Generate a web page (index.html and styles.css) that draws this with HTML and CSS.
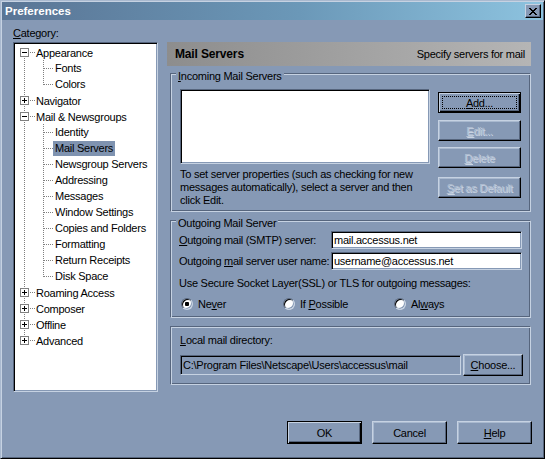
FILE: index.html
```html
<!DOCTYPE html>
<html lang="en">
<head>
<meta charset="utf-8">
<title>Preferences</title>
<link rel="stylesheet" href="styles.css">
</head>
<body>
<div class="window">
  <div class="titlebar">
    <span class="title">Preferences</span>
    <span class="close" aria-label="Close">
      <svg width="8" height="7" viewBox="0 0 8 7" shape-rendering="crispEdges"><path fill="#000" d="M0 0h2v1H0zM6 0h2v1H6zM1 1h2v1H1zM5 1h2v1H5zM2 2h4v1H2zM3 3h2v1H3zM2 4h4v1H2zM1 5h2v1H1zM5 5h2v1H5zM0 6h2v1H0zM6 6h2v1H6z"/></svg>
    </span>
  </div>

  <div class="main">
    <div class="leftcol">
      <div class="cat-label"><u>C</u>ategory:</div>
      <div class="tree">
        <div class="row"><span class="l1 first"><span class="exp minus"></span></span><span class="txt">Appearance</span></div>
        <div class="row"><span class="l1 full"></span><span class="l2 mid"></span><span class="txt">Fonts</span></div>
        <div class="row"><span class="l1 full"></span><span class="l2 last"></span><span class="txt">Colors</span></div>
        <div class="row"><span class="l1 full"><span class="exp plus"></span></span><span class="txt">Navigator</span></div>
        <div class="row"><span class="l1 full"><span class="exp minus"></span></span><span class="txt">Mail &amp; Newsgroups</span></div>
        <div class="row"><span class="l1 full"></span><span class="l2 mid"></span><span class="txt">Identity</span></div>
        <div class="row"><span class="l1 full"></span><span class="l2 mid"></span><span class="txt sel">Mail Servers</span></div>
        <div class="row"><span class="l1 full"></span><span class="l2 mid"></span><span class="txt">Newsgroup Servers</span></div>
        <div class="row"><span class="l1 full"></span><span class="l2 mid"></span><span class="txt">Addressing</span></div>
        <div class="row"><span class="l1 full"></span><span class="l2 mid"></span><span class="txt">Messages</span></div>
        <div class="row"><span class="l1 full"></span><span class="l2 mid"></span><span class="txt">Window Settings</span></div>
        <div class="row"><span class="l1 full"></span><span class="l2 mid"></span><span class="txt">Copies and Folders</span></div>
        <div class="row"><span class="l1 full"></span><span class="l2 mid"></span><span class="txt">Formatting</span></div>
        <div class="row"><span class="l1 full"></span><span class="l2 mid"></span><span class="txt">Return Receipts</span></div>
        <div class="row"><span class="l1 full"></span><span class="l2 last"></span><span class="txt">Disk Space</span></div>
        <div class="row"><span class="l1 full"><span class="exp plus"></span></span><span class="txt">Roaming Access</span></div>
        <div class="row"><span class="l1 full"><span class="exp plus"></span></span><span class="txt">Composer</span></div>
        <div class="row"><span class="l1 full"><span class="exp plus"></span></span><span class="txt">Offline</span></div>
        <div class="row"><span class="l1 last"><span class="exp plus"></span></span><span class="txt">Advanced</span></div>
      </div>
    </div>

    <div class="rightcol">
      <div class="header">
        <span class="h-title">Mail Servers</span>
        <span class="h-desc">Specify servers for mail</span>
      </div>

      <div class="group incoming">
        <div class="legend"><u>I</u>ncoming Mail Servers</div>
        <div class="inc-row">
          <div class="inc-left">
            <div class="listbox sunken"></div>
            <p class="help">To set server properties (such as checking for new messages automatically), select a server and then click Edit.</p>
          </div>
          <div class="inc-buttons">
            <button class="btn default focus b-add"><u>A</u>dd...</button>
            <button class="btn off b-edit"><u>E</u>dit...</button>
            <button class="btn off b-del"><u>D</u>elete</button>
            <button class="btn off b-set"><u>S</u>et as Default</button>
          </div>
        </div>
      </div>

      <div class="group outgoing">
        <div class="legend">Outgoing Mail Server</div>
        <div class="orow first-orow">
          <span class="olabel"><u>O</u>utgoing mail (SMTP) server:</span>
          <input class="field sunken" type="text" value="mail.accessus.net">
        </div>
        <div class="orow second-orow">
          <span class="olabel">Outgoing <u>m</u>ail server user name:</span>
          <input class="field sunken" type="text" value="username@accessus.net">
        </div>
        <div class="ssl">Use Secure Socket Layer(SSL) or TLS for outgoing messages:</div>
        <div class="radios">
          <span class="ritem"><span class="radio checked"></span><span>Ne<u>v</u>er</span></span>
          <span class="ritem"><span class="radio"></span><span>If <u>P</u>ossible</span></span>
          <span class="ritem"><span class="radio"></span><span>Al<u>w</u>ays</span></span>
        </div>
      </div>

      <div class="group local">
        <div class="llabel"><u>L</u>ocal mail directory:</div>
        <div class="lrow">
          <div class="path sunken">C:\Program Files\Netscape\Users\accessus\mail</div>
          <button class="btn b-choose"><u>C</u>hoose...</button>
        </div>
      </div>
    </div>
  </div>

  <div class="footer">
    <button class="btn default b-foot">OK</button>
    <button class="btn b-foot">Cancel</button>
    <button class="btn b-foot"><u>H</u>elp</button>
  </div>
</div>
</body>
</html>
```
FILE: styles.css
```css
:root {
  --face: #8699b5;
  --light: #c6d2e2;
  --light2: #a9b9cf;
  --dark: #56657d;
  --sel: #7f93b0;
  --tree-line: #808080;
}

* { box-sizing: border-box; }

html, body {
  margin: 0;
  padding: 0;
  background: var(--face);
}

body {
  font-family: "Liberation Sans", Arial, sans-serif;
  font-size: 11px;
  letter-spacing: -0.25px;
  color: #000;
}

u { text-decoration: underline; text-underline-offset: 1px; }

.window {
  width: 545px;
  height: 459px;
  background: var(--face);
  border: 1px solid;
  border-color: var(--light2) #000 #000 var(--light2);
  box-shadow: inset 1px 1px 0 var(--light), inset -1px -1px 0 var(--dark);
  padding: 1px;
  display: flex;
  flex-direction: column;
}

/* ---------- title bar ---------- */
.titlebar {
  height: 18px;
  flex: none;
  display: flex;
  align-items: center;
  justify-content: space-between;
  background: linear-gradient(to right, #5a7595 0%, #6b98b8 55%, #8dc3df 100%);
}

.title {
  color: #fff;
  font-weight: bold;
  font-size: 11.5px;
  letter-spacing: 0;
  padding-left: 3px;
  line-height: 18px;
}

.close {
  width: 16px;
  height: 14px;
  margin-right: 2px;
  background: var(--face);
  border: 1px solid;
  border-color: var(--light) #000 #000 var(--light);
  box-shadow: inset -1px -1px 0 var(--dark);
  display: flex;
  align-items: center;
  justify-content: center;
  padding-right: 1px;
}

.close svg { display: block; }

/* ---------- main ---------- */
.main {
  display: flex;
  padding: 6px 0 0 11px;
  flex: none;
}

.leftcol {
  width: 145px;
  flex: none;
}

.cat-label {
  line-height: 13px;
  height: 13px;
  margin-bottom: 3px;
  padding-top: 1px;
}

.tree {
  width: 145px;
  height: 350px;
  background: #fff;
  border: 1px solid;
  border-color: var(--dark) var(--light) var(--light) var(--dark);
  box-shadow: inset 1px 1px 0 #000, inset -1px -1px 0 var(--face);
  padding: 1px;
}

.row {
  display: flex;
  height: 16px;
  align-items: flex-start;
}

.l1 {
  width: 21px;
  height: 16px;
  flex: none;
  display: block;
}

.l2 {
  width: 17px;
  height: 16px;
  flex: none;
  display: block;
}

/* tree connectors */
.l1.full {
  background:
    repeating-linear-gradient(to right, var(--tree-line) 0 1px, transparent 1px 2px) 15px 8px / 5px 1px no-repeat,
    repeating-linear-gradient(to bottom, var(--tree-line) 0 1px, transparent 1px 2px) 9px 0 / 1px 16px no-repeat;
}
.l1.first {
  background:
    repeating-linear-gradient(to right, var(--tree-line) 0 1px, transparent 1px 2px) 15px 8px / 5px 1px no-repeat,
    repeating-linear-gradient(to bottom, var(--tree-line) 0 1px, transparent 1px 2px) 9px 8px / 1px 8px no-repeat;
}
.l1.last {
  background:
    repeating-linear-gradient(to right, var(--tree-line) 0 1px, transparent 1px 2px) 15px 8px / 5px 1px no-repeat,
    repeating-linear-gradient(to bottom, var(--tree-line) 0 1px, transparent 1px 2px) 9px 0 / 1px 8px no-repeat;
}

.l2.mid {
  background:
    repeating-linear-gradient(to right, var(--tree-line) 0 1px, transparent 1px 2px) 8px 8px / 9px 1px no-repeat,
    repeating-linear-gradient(to bottom, var(--tree-line) 0 1px, transparent 1px 2px) 7px 0 / 1px 16px no-repeat;
}
.l2.last {
  background:
    repeating-linear-gradient(to right, var(--tree-line) 0 1px, transparent 1px 2px) 8px 8px / 9px 1px no-repeat,
    repeating-linear-gradient(to bottom, var(--tree-line) 0 1px, transparent 1px 2px) 7px 0 / 1px 9px no-repeat;
}

/* child rows: the l1 lane only carries the vertical line */
.row .l1.full:not(:has(.exp)) {
  background:
    repeating-linear-gradient(to bottom, var(--tree-line) 0 1px, transparent 1px 2px) 9px 0 / 1px 16px no-repeat;
}

.exp {
  display: block;
  width: 9px;
  height: 9px;
  margin: 4px 0 0 5px;
  border: 1px solid var(--tree-line);
  background-color: #fff;
}
.exp.minus {
  background: linear-gradient(#000, #000) 1px 3px / 5px 1px no-repeat, #fff;
}
.exp.plus {
  background:
    linear-gradient(#000, #000) 1px 3px / 5px 1px no-repeat,
    linear-gradient(#000, #000) 3px 1px / 1px 5px no-repeat,
    #fff;
}

.txt {
  line-height: 16px;
  padding-top: 1px;
  white-space: nowrap;
}
.l2 + .txt {
  padding: 0 2px;
  line-height: 15px;
  height: 15px;
  margin-top: 1px;
}
.txt.sel { background: var(--sel); }

/* ---------- right column ---------- */
.rightcol {
  width: 364px;
  margin-left: 9px;
  padding-top: 16px;
  flex: none;
}

.header {
  height: 24px;
  display: flex;
  align-items: center;
  justify-content: space-between;
  padding: 0 6px 0 8px;
  background: linear-gradient(to right, #8d8d8d, #b5b5b5);
}

.h-title {
  font-weight: bold;
  font-size: 12px;
  letter-spacing: -0.15px;
}

.group {
  margin-left: 3px;
  width: 361px;
  border: 1px solid;
  border-color: var(--dark) var(--light) var(--light) var(--dark);
  box-shadow: inset 1px 1px 0 var(--light), inset -1px -1px 0 var(--dark);
  padding-left: 9px;
}

.legend {
  width: fit-content;
  background: var(--face);
  padding: 0 2px;
  line-height: 14px;
  height: 14px;
  margin: -5px 0 0 -4px;
  white-space: nowrap;
}

.incoming {
  margin-top: 7px;
  padding-bottom: 4px;
}

.inc-row {
  display: flex;
  margin-top: 6px;
}

.inc-left { width: 250px; flex: none; }

.listbox {
  width: 250px;
  height: 75px;
  background: #fff;
}

.sunken {
  border: 1px solid;
  border-color: var(--dark) var(--light) var(--light) var(--dark);
  box-shadow: inset 1px 1px 0 #000, inset -1px -1px 0 var(--face);
}

.help {
  margin: 4px 0 0 0;
  line-height: 13px;
}

.inc-buttons {
  margin-left: 8px;
  padding-top: 3px;
  display: flex;
  flex-direction: column;
  width: 83px;
}

.btn {
  font: inherit;
  letter-spacing: inherit;
  color: #000;
  background: var(--face);
  border: 1px solid;
  border-color: var(--light) #000 #000 var(--light);
  box-shadow: inset -1px -1px 0 var(--dark), inset 1px 1px 0 var(--light2);
  padding: 0;
  margin: 0;
  display: flex;
  align-items: center;
  justify-content: center;
  white-space: nowrap;
}

.btn.default {
  border-color: #000;
  box-shadow: inset 1px 1px 0 var(--light), inset -1px -1px 0 #000, inset -2px -2px 0 var(--dark);
}

.btn.focus {
  outline: 1px dotted #000;
  outline-offset: -5px;
}

.btn.off {
  color: #b2c0d3;
  text-shadow: 1px 1px 0 #c9d4e3;
}

.b-add { width: 83px; height: 21px; }
.b-edit { width: 83px; height: 21px; margin-top: 7px; }
.b-del { width: 83px; height: 21px; margin-top: 6px; }
.b-set { width: 83px; height: 21px; margin-top: 9px; }

.outgoing {
  margin-top: 8px;
  padding-bottom: 7px;
  padding-left: 8px;
}
.outgoing .legend { margin-left: -3px; }

.orow {
  display: flex;
  align-items: center;
}
.first-orow { margin-top: 1px; }
.second-orow { margin-top: 3px; }

.olabel {
  width: 152px;
  flex: none;
  white-space: nowrap;
  letter-spacing: -0.3px;
}

.field {
  width: 191px;
  height: 18px;
  font: inherit;
  letter-spacing: inherit;
  color: #000;
  background: #fff;
  padding: 0 0 0 2px;
  margin: 0;
  outline: none;
}

.ssl {
  margin-top: 7px;
  line-height: 13px;
  white-space: nowrap;
}

.radios {
  margin-top: 8px;
  height: 12px;
  display: grid;
  grid-template-columns: 102px 111px auto;
  padding-left: 2px;
}

.ritem {
  display: flex;
  align-items: center;
  gap: 5px;
  height: 12px;
  line-height: 12px;
  white-space: nowrap;
}

.radio {
  width: 12px;
  height: 12px;
  flex: none;
  border-radius: 50%;
  border: 1px solid;
  border-color: var(--dark) var(--light) var(--light) var(--dark);
  box-shadow: inset 1px 1px 0 #000, inset -1px -1px 0 var(--face);
  background: #fff;
}
.radio.checked {
  background: radial-gradient(circle at 50% 50%, #000 0 2px, #fff 2.5px);
}

.local {
  margin-top: 8px;
  padding-top: 7px;
  padding-bottom: 8px;
}

.llabel {
  line-height: 13px;
  white-space: nowrap;
}

.lrow {
  display: flex;
  align-items: center;
  margin-top: 7px;
  height: 22px;
}

.path {
  width: 281px;
  height: 20px;
  line-height: 18px;
  padding-left: 2px;
  white-space: nowrap;
  overflow: hidden;
  background: var(--face);
}

.b-choose {
  width: 60px;
  height: 22px;
  margin-left: 2px;
}

/* ---------- footer ---------- */
.footer {
  display: flex;
  justify-content: flex-end;
  gap: 10px;
  margin-top: 29px;
  padding-right: 11px;
}

.b-foot {
  width: 75px;
  height: 23px;
}
```
